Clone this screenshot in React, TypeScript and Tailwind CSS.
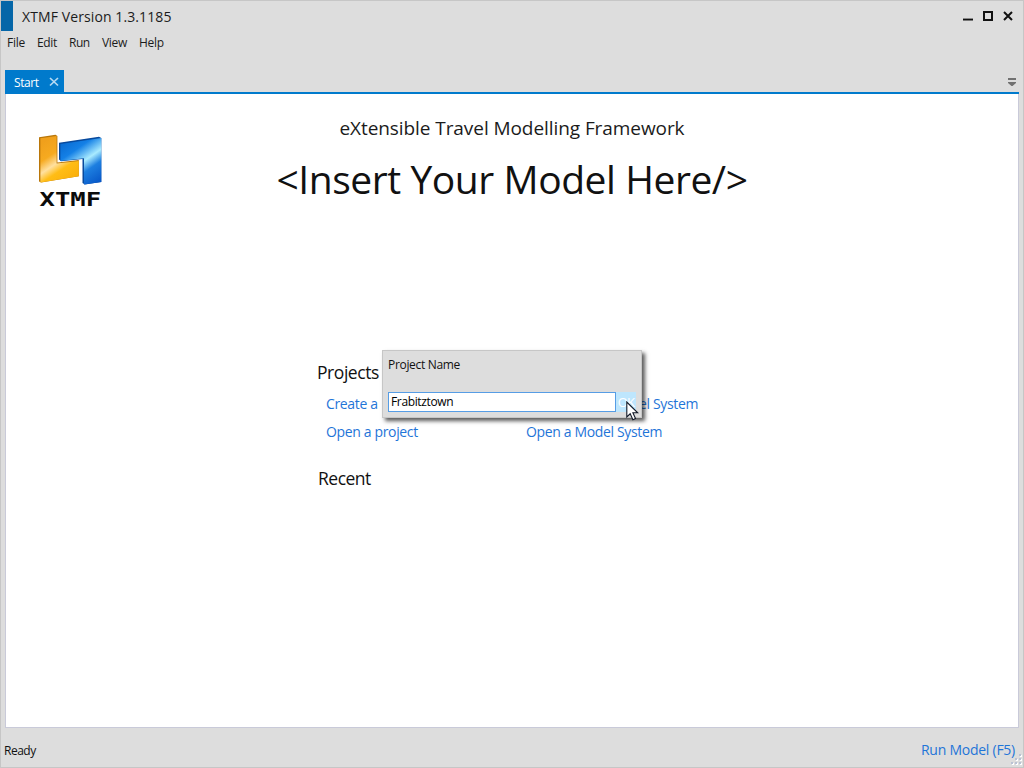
import type { ReactNode } from "react";

const menu = [
  { label: "File", style: "w-[30px] tracking-[-0.25px]" },
  { label: "Edit", style: "w-[32px] tracking-[-0.35px]" },
  { label: "Run", style: "w-[33px] tracking-[-0.45px]" },
  { label: "View", style: "w-[37px] tracking-[-0.3px]" },
  { label: "Help", style: "w-[36px] tracking-[-0.3px]" },
];

function Logo() {
  return (
    <svg width="72" height="80" viewBox="0 0 72 80" aria-label="XTMF">
      <defs>
        <linearGradient id="gold" gradientUnits="userSpaceOnUse" x1="6" y1="14" x2="34" y2="56">
          <stop offset="0" stopColor="#f0a01c" />
          <stop offset="0.3" stopColor="#f6aa20" />
          <stop offset="0.5" stopColor="#ffe0a0" />
          <stop offset="0.66" stopColor="#ffbd16" />
          <stop offset="1" stopColor="#f9ad08" />
        </linearGradient>
        <linearGradient id="azure" gradientUnits="userSpaceOnUse" x1="34" y1="6" x2="66" y2="52">
          <stop offset="0" stopColor="#0768cf" />
          <stop offset="0.28" stopColor="#1480e6" />
          <stop offset="0.53" stopColor="#a9ebff" />
          <stop offset="0.7" stopColor="#1d7fe0" />
          <stop offset="1" stopColor="#0757c8" />
        </linearGradient>
      </defs>
      <path d="M5 7.3 21.5 4.8 23.4 6V32.4L44.8 30V46.3L7.2 52.5 5 51.5Z" fill="#b97609" />
      <path d="M6.4 8.2 22.6 6V33.6L44.8 31V46.3L6.4 52.5Z" fill="url(#gold)" />
      <path d="M25 12.8 65 6.8 67.3 8V52L50.8 54.6 48.5 53V29L27 31.3 25 29.5Z" fill="#07499d" />
      <path d="M26.4 14 67.3 8V52L50 54.6V28.3L26.4 31Z" fill="url(#azure)" />
      <g transform="translate(5.5 76) scale(1.28 1)">
        <text className="font-['DejaVu_Sans_Mono',monospace] text-[20px] font-bold" fill="#0b0b0b">XTMF</text>
      </g>
    </svg>
  );
}

function Link({ children, className = "pl-[9px]" }: { children: ReactNode; className?: string }) {
  return <a className={`block h-7 whitespace-nowrap text-[14px] leading-7 tracking-[-0.35px] text-[#1f75d8] ${className}`}>{children}</a>;
}

function TitleBar() {
  return (
    <header className="flex h-[30px] shrink-0">
      <div className="h-[30px] w-3 bg-[#0566a8]" />
      <h1 className="pl-[9px] text-[14px] leading-[31px] tracking-[0.1px] text-[#1b1b1b]">XTMF Version 1.3.1185</h1>
      <svg className="ml-auto mr-[9px] mt-2" width="52" height="14" viewBox="0 0 52 14" fill="none">
        <path d="M1 9.5H11" stroke="#888" />
        <path d="M1 10.75H11" stroke="#111" strokeWidth="1.5" />
        <path d="M22 3H30V11H22Z" stroke="#111" strokeWidth="2" />
        <path d="M42 3 50 11M50 3 42 11" stroke="#111" strokeWidth="2" />
      </svg>
    </header>
  );
}

function ProjectDialog() {
  return (
    <div className="absolute left-[376px] top-[256px] h-[68px] w-[260px] border border-[#c6c6c6] bg-[#dddddd] pl-[5px] shadow-[3px_3px_4px_rgba(0,0,0,0.65)]">
      <label className="block h-[41px] pt-1 text-[12px] leading-5 tracking-[-0.32px] text-[#111]">Project Name</label>
      <div className="flex">
        <div className="h-5 w-[228px] border border-[#569de5] bg-white pl-[2px] text-[12px] leading-[18px] tracking-[-0.36px] text-black">Frabitztown</div>
        <button className="h-5 w-5 bg-[#bee6fd] text-center text-[13px] leading-5 tracking-[-0.9px] text-white">OK</button>
      </div>
      <svg className="absolute left-[243px] top-[50px]" width="13" height="20" viewBox="0 0 13 20">
        <path d="M.8 1V16L4.2 12.8 6.9 18.7 9.5 17.5 6.9 11.8H11.7Z" fill="white" stroke="#111827" strokeWidth="1.1" />
      </svg>
    </div>
  );
}

export default function App() {
  return (
    <div className="flex h-[768px] w-[1024px] flex-col overflow-hidden border border-[#c6c6c6] bg-[#dddddd] font-['Open_Sans',sans-serif] text-[#111]">
      <TitleBar />
      <nav className="flex h-[39px] shrink-0 pl-[6px] text-[12px] leading-6 text-[#1b1b1b]">
        {menu.map(({ label, style }) => <span key={label} className={style}>{label}</span>)}
      </nav>
      <div className="mx-1 flex h-6 shrink-0 border-b-2 border-[#007acc]">
        <div className="flex h-[22px] w-[59px] bg-[#007acc] pl-[9px] text-white">
          <span className="w-[35px] text-[12px] leading-[25px] tracking-[-0.42px]">Start</span>
          <svg className="mt-[7px]" width="10" height="10" viewBox="0 0 10 10"><path d="M1 1 9 8.5M9 1 1 8.5" stroke="#b5d9f2" strokeWidth="1.7" /></svg>
        </div>
        <svg className="ml-auto mr-[2px] mt-2" width="9" height="9" viewBox="0 0 9 9"><path d="M0 0H8V2H0ZM0 4H8V5L4.5 8H3.5L0 5Z" fill="#717171" /></svg>
      </div>
      <main className="relative mx-1 flex h-[634px] shrink-0 flex-col border border-t-0 border-[#c9cad9] bg-white">
        <div className="flex h-[260px]">
          <div className="w-[28px]" />
          <div className="w-[72px] pt-9"><Logo /></div>
          <div className="w-[812px] pt-[18px] text-center">
            <h2 className="h-8 text-[19px] leading-8 tracking-[-0.07px] text-[#1b1b1b]">eXtensible Travel Modelling Framework</h2>
            <div className="mt-[5px] h-[60px] whitespace-nowrap text-[39px] leading-[60px] tracking-[-0.44px]">&lt;Insert Your Model Here/&gt;</div>
          </div>
        </div>
        <section className="ml-[311px] flex">
          <div className="w-[200px]">
            <h3 className="h-[36px] text-[17.5px] leading-9 tracking-[-0.44px]">Projects</h3>
            <Link>Create a</Link>
            <Link>Open a project</Link>
          </div>
          <div className="pt-[36px]">
            <Link className="pl-[122px]">el System</Link>
            <Link>Open a Model System</Link>
          </div>
        </section>
        <h3 className="ml-[312px] mt-[16px] h-8 text-[17.5px] leading-[33px] tracking-[-0.5px]">Recent</h3>
        <ProjectDialog />
      </main>
      <footer className="relative flex h-[38px] shrink-0 justify-between pl-[3px] pr-2 pt-[6px]">
        <span className="text-[12px] leading-[34px] tracking-[-0.5px]">Ready</span>
        <a className="text-[14px] leading-8 tracking-[-0.25px] text-[#1f75d8]">Run Model (F5)</a>
        <svg className="absolute bottom-0 right-0" width="14" height="14" viewBox="0 0 14 14">
          {[[10, 2], [6, 6], [10, 6], [2, 10], [6, 10], [10, 10]].map(([x, y]) => (
            <g key={`${x}-${y}`}><path d={`M${x + 1} ${y + 1}h2v2h-2z`} fill="#fff" /><path d={`M${x} ${y}h2v2h-2z`} fill="#b9c2d4" /></g>
          ))}
        </svg>
      </footer>
    </div>
  );
}
